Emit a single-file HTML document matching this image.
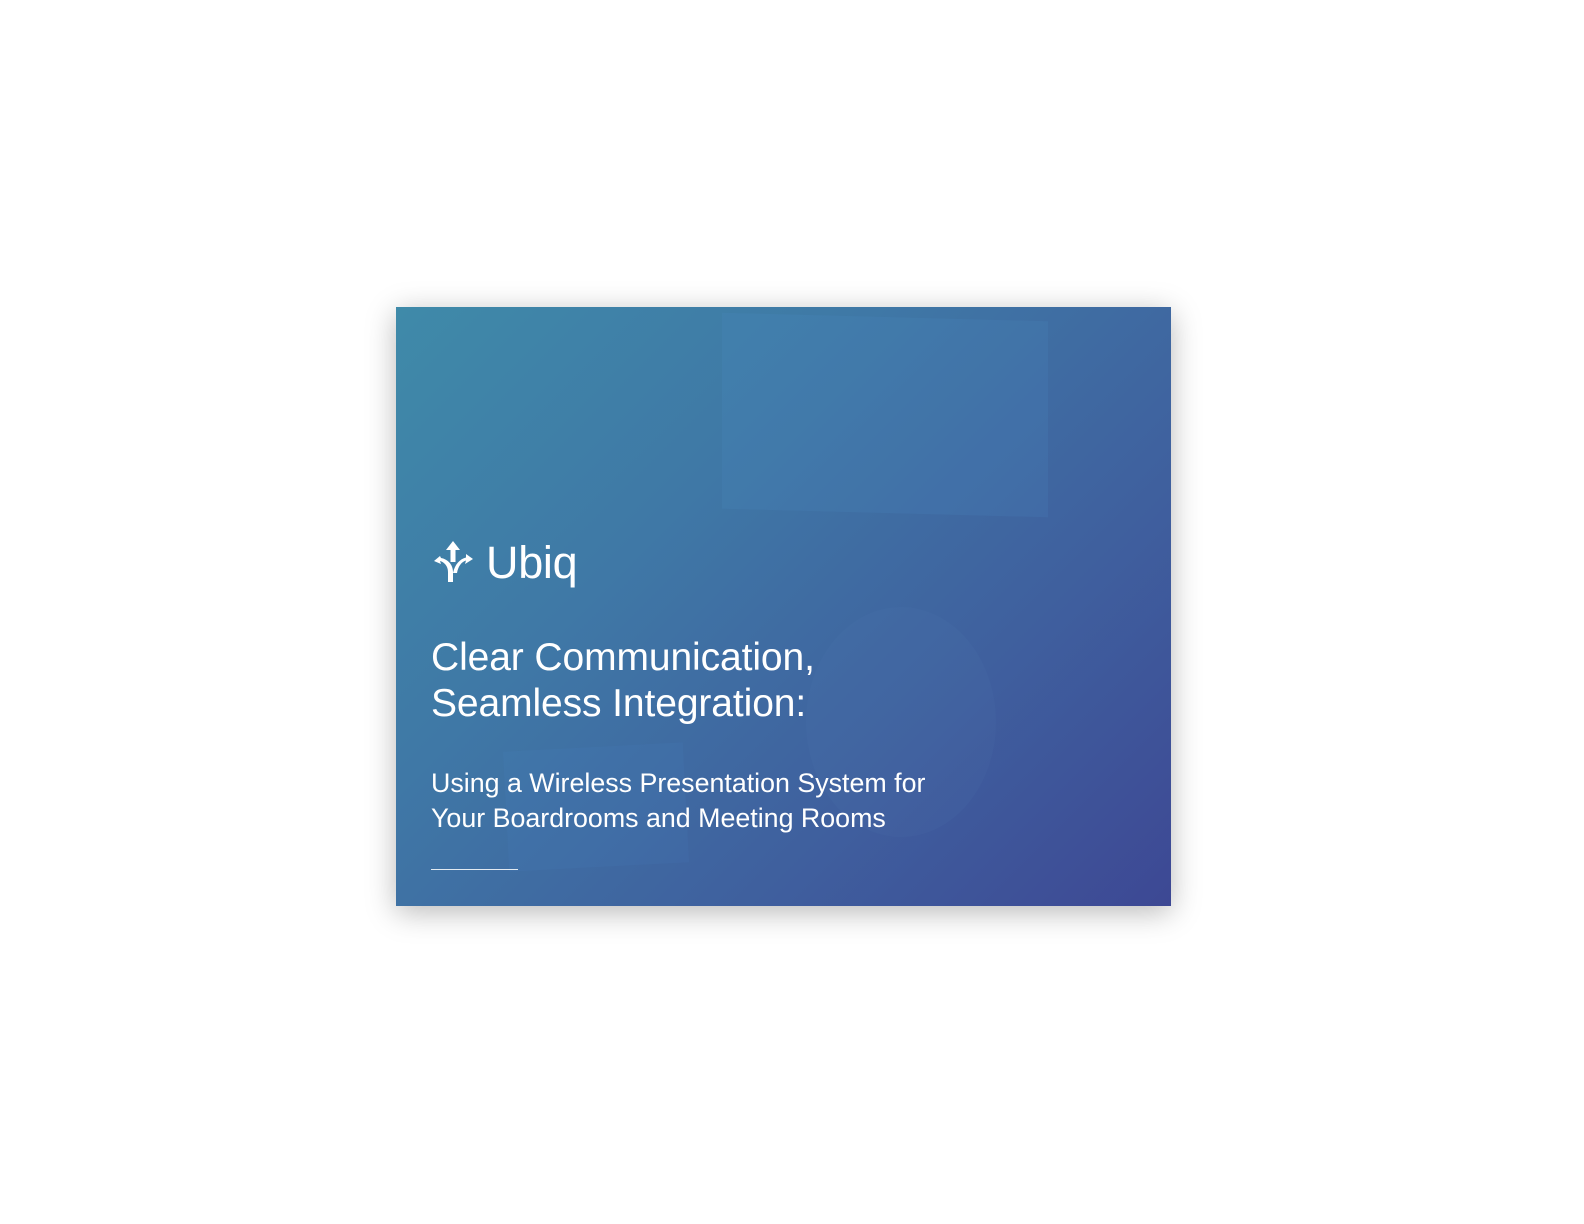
<!DOCTYPE html>
<html><head><meta charset="utf-8"><style>
html,body{margin:0;padding:0;background:#fff;width:1584px;height:1224px;overflow:hidden}
.card{position:absolute;left:396px;top:307px;width:775px;height:599px;overflow:hidden;
background:linear-gradient(135deg,#3f8aa9 0%,#3f78a6 35%,#3f5f9e 70%,#3d4894 100%);
box-shadow:0 6px 28px rgba(0,0,0,0.28)}
.sh{position:absolute}
.t{position:absolute;left:35px;color:#fff;font-family:"Liberation Sans",sans-serif;white-space:nowrap}
</style></head><body>
<div class="card">
 <div class="sh" style="left:326px;top:10px;width:326px;height:196px;background:rgba(80,140,200,0.16);transform:skewY(1.5deg)"></div>
 <div class="sh" style="left:410px;top:300px;width:190px;height:230px;border-radius:50%;background:rgba(90,130,190,0.09)"></div>
 <div class="sh" style="left:110px;top:440px;width:180px;height:120px;background:rgba(80,140,210,0.1);transform:rotate(-3deg)"></div>
 <svg class="sh" style="left:35px;top:233px" width="44" height="44" viewBox="0 0 44 44">
  <g fill="#fff">
   <polygon points="22,1 29,10 24.5,10 24.5,22 19.5,22 19.5,10 15,10"/>
   <path d="M9,16 L3,21 L10,24 L9,21 C13,22 17,26 17,32 L17,42 L22,42 L22,32 C22,24 16,19 10,18 Z"/>
   <path d="M35,14 L42,19 L34,24 L35,20.5 C30,22 27,27 26,33 L22,33 C24,24 29,19 35,17.5 Z"/>
  </g>
 </svg>
 <div class="t" style="left:90px;top:230px;font-size:45px;letter-spacing:-0.3px">Ubiq</div>
 <div class="t" style="top:328px;font-size:39px;line-height:46px;letter-spacing:-0.1px">Clear Communication,<br>Seamless Integration:</div>
 <div class="t" style="top:459px;font-size:26.8px;line-height:35px;letter-spacing:0">Using a Wireless Presentation System for<br>Your Boardrooms and Meeting Rooms</div>
 <div class="sh" style="left:35px;top:562px;width:87px;height:1px;background:rgba(255,255,255,0.85)"></div>
</div>
</body></html>
